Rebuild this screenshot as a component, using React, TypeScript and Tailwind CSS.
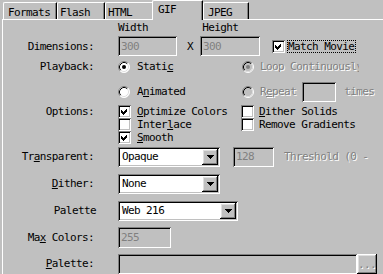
import type { ReactNode } from "react";

// Win95-style bevels
const sunken =
  "shadow-[inset_1px_1px_0_#808080,inset_-1px_-1px_0_#ffffff,inset_2px_2px_0_#000000,inset_-2px_-2px_0_#c0c0c0]";
const raised =
  "shadow-[inset_-1px_-1px_0_#000000,inset_1px_1px_0_#ffffff,inset_-2px_-2px_0_#808080,inset_2px_2px_0_#dfdfdf]";
const dis = "text-[#808080] [text-shadow:1px_1px_0_#ffffff]";

function Tab({ label, className, active }: { label: string; className: string; active?: boolean }) {
  return (
    <div
      className={
        "shrink-0 border-t border-l border-white border-r border-r-black rounded-tl-[2px] rounded-tr-[1px] shadow-[inset_-1px_0_0_#808080] whitespace-nowrap " +
        (active ? "h-[20px] -mb-[1px] relative z-10 bg-[#c0c0c0] pt-[3px] " : "h-[17px] pt-[4px] ") +
        className
      }
    >
      {label}
    </div>
  );
}

function Check({ checked }: { checked?: boolean }) {
  return (
    <span className={"block shrink-0 w-[13px] h-[13px] bg-white " + sunken}>
      {checked && (
        <svg width="13" height="13" viewBox="0 0 13 13" shapeRendering="crispEdges">
          <polygon points="3,5 5,7 9,3 9,6 5,10 3,8" fill="#000" />
        </svg>
      )}
    </span>
  );
}

function Radio({ on, disabled }: { on?: boolean; disabled?: boolean }) {
  return (
    <svg width="12" height="12" viewBox="0 0 12 12" className="shrink-0">
      <circle cx="6" cy="6" r="5.5" fill={disabled ? "#c0c0c0" : "#ffffff"} />
      <path d="M2.11 9.89 A5.5 5.5 0 0 1 9.89 2.11" stroke="#808080" fill="none" />
      <path d="M9.89 2.11 A5.5 5.5 0 0 1 2.11 9.89" stroke="#ffffff" fill="none" />
      <path d="M2.82 9.18 A4.5 4.5 0 0 1 9.18 2.82" stroke="#000000" fill="none" />
      <path d="M9.18 2.82 A4.5 4.5 0 0 1 2.82 9.18" stroke="#dfdfdf" fill="none" />
      {on && <circle cx="6" cy="6" r="2" fill={disabled ? "#808080" : "#000000"} />}
    </svg>
  );
}

function Select({ value, className }: { value: string; className: string }) {
  return (
    <div className={"flex h-[20px] p-[2px] bg-white shrink-0 " + sunken + " " + className}>
      <div className="flex-1 flex items-center pl-[2px] whitespace-nowrap">{value}</div>
      <div className={"w-[16px] h-[16px] bg-[#c0c0c0] flex items-center justify-center " + raised}>
        <svg width="7" height="4" viewBox="0 0 7 4" shapeRendering="crispEdges">
          <polygon points="0,0 7,0 3.5,4" fill="#000" />
        </svg>
      </div>
    </div>
  );
}

function Field({ value, className }: { value?: string; className: string }) {
  return (
    <div className={"flex items-center pl-[3px] bg-[#c0c0c0] text-[#808080] shrink-0 " + sunken + " " + className}>
      {value}
    </div>
  );
}

function Label({ children, className = "w-[91px]" }: { children: ReactNode; className?: string }) {
  return <div className={"shrink-0 text-right whitespace-nowrap " + className}>{children}</div>;
}

export default function App() {
  return (
    <div className="w-[383px] h-[274px] overflow-hidden bg-[#c0c0c0] text-black font-['DejaVu_Sans_Mono',monospace] text-[11px] tracking-[-0.6px] leading-none select-none">
      {/* tab strip */}
      <div className="flex items-end h-[19px] pl-[3px]">
        <Tab label="Formats" className="w-[54px] pl-[4px]" />
        <Tab label="Flash" className="w-[48px] pl-[2px]" />
        <Tab label="HTML" className="w-[49px] pl-[2px]" />
        <Tab label="GIF" active className="w-[51px] -ml-[2px] pl-[5px]" />
        <Tab label="JPEG" className="w-[46px] pl-[4px]" />
      </div>

      {/* panel */}
      <div className="ml-[2px] h-[255px] border-t border-l border-white flex flex-col">
        <div className="flex items-center h-[15px] whitespace-nowrap">
          <span className="ml-[115px]">Width</span>
          <span className="ml-[54px]">Height</span>
        </div>

        <div className="flex items-center h-[20px] mt-[2px]">
          <Label>Dimensions:</Label>
          <Field value="300" className="ml-[24px] w-[59px] h-[20px]" />
          <span className="ml-[10px]">X</span>
          <Field value="300" className="ml-[7px] w-[60px] h-[20px]" />
          <span className="ml-[12px]">
            <Check checked />
          </span>
          <span className="ml-[2px] border border-dotted border-black h-[13px] flex items-center pr-[1px] whitespace-nowrap">
            Match Movie
          </span>
        </div>

        <div className="flex items-center h-[14px] mt-[4px]">
          <Label>Playback:</Label>
          <div className="ml-[24px] w-[124px] flex items-center shrink-0">
            <Radio on />
            <span className="ml-[7px]">
              Stati<u>c</u>
            </span>
          </div>
          <Radio on disabled />
          {/* the static control is narrower than its caption */}
          <span className={"ml-[6px] w-[99px] overflow-hidden whitespace-nowrap " + dis}>
            Loop Continuousl<u>y</u>
          </span>
        </div>

        <div className="flex items-center h-[20px] mt-[8px]">
          <Label> </Label>
          <div className="ml-[24px] w-[124px] flex items-center shrink-0">
            <Radio />
            <span className="ml-[7px]">
              A<u>n</u>imated
            </span>
          </div>
          <Radio disabled />
          <span className={"ml-[6px] whitespace-nowrap " + dis}>
            R<u>e</u>peat
          </span>
          <Field className="ml-[6px] w-[34px] h-[20px]" />
          <span className={"ml-[8px] " + dis}>times</span>
        </div>

        <div className="flex items-center h-[13px] mt-[3px]">
          <Label>Options:</Label>
          <div className="ml-[24px] w-[123px] flex items-center shrink-0 whitespace-nowrap">
            <Check checked />
            <span className="ml-[6px]">
              <u>O</u>ptimize Colors
            </span>
          </div>
          <Check />
          <span className="ml-[5px] whitespace-nowrap">
            <u>D</u>ither Solids
          </span>
        </div>

        <div className="flex items-center h-[14px]">
          <Label> </Label>
          <div className="ml-[24px] w-[123px] flex items-center shrink-0 whitespace-nowrap">
            <Check />
            <span className="ml-[6px]">
              Inter<u>l</u>ace
            </span>
          </div>
          <Check />
          <span className="ml-[5px] whitespace-nowrap">Remove Gradients</span>
        </div>

        <div className="flex items-center h-[13px]">
          <Label> </Label>
          <div className="ml-[24px] flex items-center shrink-0">
            <Check checked />
            <span className="ml-[6px]">
              <u>S</u>mooth
            </span>
          </div>
        </div>

        <div className="flex items-center h-[20px] mt-[3px]">
          <Label>
            Tr<u>a</u>nsparent:
          </Label>
          <Select value="Opaque" className="ml-[24px] w-[102px]" />
          <Field value="128" className="ml-[13px] w-[41px] h-[20px]" />
          <span className={"ml-[10px] whitespace-nowrap " + dis}>Threshold (0 -</span>
        </div>

        <div className="flex items-center h-[20px] mt-[7px]">
          <Label>
            <u>D</u>ither:
          </Label>
          <Select value="None" className="ml-[24px] w-[102px]" />
        </div>

        <div className="flex items-center h-[20px] mt-[7px]">
          <Label className="w-[93px]">Palette</Label>
          <Select value="Web 216" className="ml-[22px] w-[120px]" />
        </div>

        <div className="flex items-center h-[21px] mt-[6px]">
          <Label>
            Ma<u>x</u> Colors:
          </Label>
          <Field value="255" className="ml-[24px] w-[53px] h-[21px]" />
        </div>

        <div className="flex items-center h-[20px] mt-[6px]">
          <Label>
            <u>P</u>alette:
          </Label>
          <Field className="ml-[24px] w-[239px] h-[20px]" />
          <div className={"w-[20px] h-[20px] shrink-0 flex items-end justify-center pb-[4px] bg-[#c0c0c0] " + raised + " " + dis}>
            ...
          </div>
        </div>
      </div>
    </div>
  );
}
